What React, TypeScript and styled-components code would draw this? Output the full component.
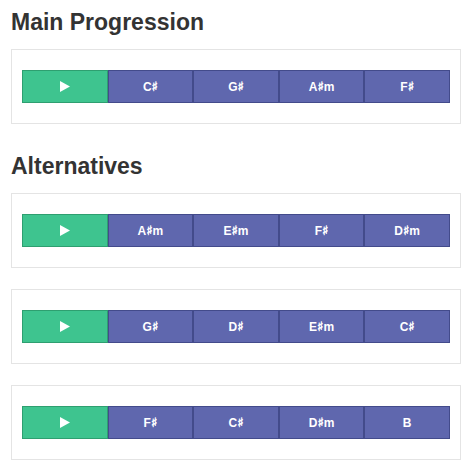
import React from "react";
import styled, { createGlobalStyle } from "styled-components";

const GlobalStyle = createGlobalStyle`
  html, body {
    margin: 0;
    padding: 0;
    background: #ffffff;
    font-family: "Liberation Sans", Arial, Helvetica, sans-serif;
  }
`;

const Page = styled.div`
  padding: 9px 11px 0 11px;
`;

const Heading = styled.h2<{ $top?: number }>`
  margin: ${({ $top }) => $top ?? 0}px 0 14px 0;
  font-size: 23px;
  line-height: 26px;
  font-weight: 700;
  color: #333333;
`;

const Card = styled.div`
  border: 1px solid #e4e4e4;
  padding: 20px 10px;
  margin-bottom: 21px;
`;

const Row = styled.div`
  display: flex;
  height: 33px;
`;

const Cell = styled.button`
  flex: 1;
  display: flex;
  align-items: center;
  justify-content: center;
  margin: 0;
  padding: 0;
  border: 1px solid #434b8b;
  background: #5f67ae;
  color: #ffffff;
  font-family: "Liberation Sans", Arial, sans-serif;
  font-weight: 700;
  font-size: 12px;
  cursor: pointer;
`;

const PlayCell = styled(Cell)`
  border-color: #2e9f70;
  background: #3ec48f;
`;

const Sharp = styled.span`
  font-family: "DejaVu Sans", sans-serif;
  font-weight: 700;
  font-size: 13px;
  -webkit-text-stroke: 0.5px #ffffff;
`;

const progressions = {
  main: ["C♯", "G♯", "A♯m", "F♯"],
  alternatives: [
    ["A♯m", "E♯m", "F♯", "D♯m"],
    ["G♯", "D♯", "E♯m", "C♯"],
    ["F♯", "C♯", "D♯m", "B"],
  ],
};

const ChordName = ({ name }: { name: string }) => {
  const parts = name.split("♯");
  if (parts.length === 1) return <>{name}</>;
  return (
    <>
      {parts[0]}
      <Sharp>♯</Sharp>
      {parts[1]}
    </>
  );
};

const PlayIcon = () => (
  <svg width="10" height="11" viewBox="0 0 10 11">
    <path d="M0 0 L10 5.5 L0 11 Z" fill="#ffffff" />
  </svg>
);

const Progression = ({ chords }: { chords: string[] }) => (
  <Card>
    <Row>
      <PlayCell aria-label="play">
        <PlayIcon />
      </PlayCell>
      {chords.map((c, i) => (
        <Cell key={i}>
          <ChordName name={c} />
        </Cell>
      ))}
    </Row>
  </Card>
);

const App = () => (
  <>
    <GlobalStyle />
    <Page>
      <Heading>Main Progression</Heading>
      <Progression chords={progressions.main} />
      <Heading $top={29}>Alternatives</Heading>
      {progressions.alternatives.map((p, i) => (
        <Progression key={i} chords={p} />
      ))}
    </Page>
  </>
);

export default App;
